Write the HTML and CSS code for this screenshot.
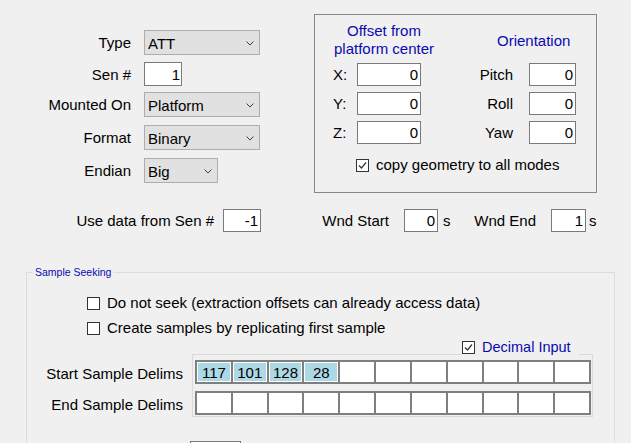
FILE: index.html
```html
<!DOCTYPE html>
<html>
<head>
<meta charset="utf-8">
<link rel="stylesheet" href="styles.css">
</head>
<body>
<div class="page">
  <div class="top">
    <div class="form">
      <div class="lbl">Type</div>
      <div class="combo w116"><span>ATT</span><svg class="chev" width="8" height="5" viewBox="0 0 8 5"><path d="M0.5 0.5 L4 4 L7.5 0.5" fill="none" stroke="#404040" stroke-width="1"/></svg></div>
      <div class="lbl lh24">Sen #</div>
      <div class="tb sen">1</div>
      <div class="lbl">Mounted On</div>
      <div class="combo w116"><span>Platform</span><svg class="chev" width="8" height="5" viewBox="0 0 8 5"><path d="M0.5 0.5 L4 4 L7.5 0.5" fill="none" stroke="#404040" stroke-width="1"/></svg></div>
      <div class="lbl">Format</div>
      <div class="combo w116"><span>Binary</span><svg class="chev" width="8" height="5" viewBox="0 0 8 5"><path d="M0.5 0.5 L4 4 L7.5 0.5" fill="none" stroke="#404040" stroke-width="1"/></svg></div>
      <div class="lbl">Endian</div>
      <div class="combo w74"><span>Big</span><svg class="chev" width="8" height="5" viewBox="0 0 8 5"><path d="M0.5 0.5 L4 4 L7.5 0.5" fill="none" stroke="#404040" stroke-width="1"/></svg></div>
    </div>
    <div class="geom">
      <div class="geo-grid">
        <div class="hdr hdr-offset">Offset from<br>platform center</div>
        <div class="hdr hdr-orient">Orientation</div>
        <div class="glbl">X:</div><div class="tb">0</div><div class="olbl">Pitch</div><div class="tb c5">0</div>
        <div class="glbl">Y:</div><div class="tb">0</div><div class="olbl">Roll</div><div class="tb c5">0</div>
        <div class="glbl">Z:</div><div class="tb">0</div><div class="olbl">Yaw</div><div class="tb c5">0</div>
        <div class="chk-row geo-chk">
          <span class="cb"><svg width="11" height="11" viewBox="0 0 11 11"><path d="M2 5.5 L4.5 8 L9 2.5" fill="none" stroke="#333" stroke-width="1.2"/></svg></span>
          <span>copy geometry to all modes</span>
        </div>
      </div>
    </div>
  </div>

  <div class="mid">
    <div class="m-lbl1">Use data from Sen #</div>
    <div class="tb m-sen">-1</div>
    <div class="m-lbl2">Wnd Start</div>
    <div class="tb m-ws">0</div>
    <div class="unit u1">s</div>
    <div class="m-lbl3">Wnd End</div>
    <div class="tb m-we">1</div>
    <div class="unit u2">s</div>
  </div>

  <fieldset class="seek">
    <legend>Sample Seeking</legend>
    <div class="chk-row opt opt1"><span class="cb"></span><span>Do not seek (extraction offsets can already access data)</span></div>
    <div class="chk-row opt opt2"><span class="cb"></span><span>Create samples by replicating first sample</span></div>
    <div class="delims">
      <div class="dl-labels">
        <div class="dl-lbl">Start Sample Delims</div>
        <div class="dl-lbl">End Sample Delims</div>
      </div>
      <div class="panel">
        <div class="chk-row dec">
          <span class="cb"><svg width="11" height="11" viewBox="0 0 11 11"><path d="M2 5.5 L4.5 8 L9 2.5" fill="none" stroke="#333" stroke-width="1.2"/></svg></span>
          <span class="blue">Decimal Input</span>
        </div>
        <div class="cells">
          <div class="cell on">117</div><div class="cell on">101</div><div class="cell on">128</div><div class="cell on">28</div>
          <div class="cell"></div><div class="cell"></div><div class="cell"></div><div class="cell"></div>
          <div class="cell"></div><div class="cell"></div><div class="cell"></div>
        </div>
        <div class="cells row2">
          <div class="cell"></div><div class="cell"></div><div class="cell"></div><div class="cell"></div>
          <div class="cell"></div><div class="cell"></div><div class="cell"></div><div class="cell"></div>
          <div class="cell"></div><div class="cell"></div><div class="cell"></div>
        </div>
      </div>
    </div>
    <div class="bottom-row"><div class="tb bottom-tb"></div></div>
  </fieldset>
</div>
</body>
</html>
```

FILE: styles.css
```css
html, body {
  margin: 0;
  padding: 0;
  overflow: hidden;
  background: #f0f0f0;
}
body {
  font-family: "Liberation Sans", Arial, sans-serif;
  font-size: 15px;
  color: #000;
}
.page {
  width: 631px;
  height: 443px;
  overflow: hidden;
}

/* ---------- generic controls ---------- */
.tb {
  box-sizing: border-box;
  background: #fff;
  border: 1px solid #7a7a7a;
  height: 23px;
  line-height: 22px;
  text-align: right;
  padding-right: 2px;
  white-space: nowrap;
}
.combo {
  box-sizing: border-box;
  height: 25px;
  background: #e1e1e1;
  border: 1px solid #adadad;
  display: flex;
  align-items: center;
  justify-content: space-between;
  padding: 1px 5px 0 3px;
  line-height: 23px;
}
.chev { display: block; }
.w116 { width: 116px; }
.w74 { width: 74px; }
.cb {
  box-sizing: border-box;
  width: 13px;
  height: 13px;
  border: 1px solid #333;
  background: #fff;
  display: flex;
  align-items: center;
  justify-content: center;
  flex: none;
}
.cb svg { display: block; }
.chk-row {
  display: flex;
  align-items: center;
  gap: 7px;
  white-space: nowrap;
  height: 18px;
  line-height: 18px;
}
.blue { color: #0a0ab0; }

/* ---------- top section ---------- */
.top {
  display: flex;
  align-items: flex-start;
  height: 193px;
}
.form {
  padding-top: 30px;
  display: grid;
  grid-template-columns: 131px auto;
  grid-template-rows: 32px 30px 33px 33px 25px;
  column-gap: 13px;
  align-items: start;
  justify-items: start;
}
.form .lbl {
  justify-self: end;
  line-height: 26px;
  white-space: nowrap;
}
.form .lbl.lh24 { line-height: 25px; }
.sen { width: 38px; height: 24px; line-height: 23px; padding-right: 1px; }

.geom {
  box-sizing: border-box;
  margin-left: 54px;
  margin-top: 14px;
  width: 283px;
  height: 179px;
  border: 1px solid #888;
  padding: 7px 0 0 18px;
}
.geo-grid {
  display: grid;
  grid-template-columns: 24px 64px 92px 16px 47px;
  grid-template-rows: 35px 23px 23px 23px auto;
  row-gap: 6px;
  align-items: start;
}
.hdr {
  color: #0a0ab0;
  line-height: 18px;
  white-space: nowrap;
}
.hdr-offset {
  grid-column: 1 / 3;
  grid-row: 1;
  justify-self: start;
  width: 102px;
  text-align: center;
}
.hdr-orient {
  grid-column: 4 / 6;
  grid-row: 1;
  align-self: center;
  justify-self: start;
  margin-left: -16px;
  margin-top: 2px;
}
.glbl {
  grid-column: 1;
  line-height: 24px;
}
.olbl {
  grid-column: 3;
  justify-self: end;
  line-height: 24px;
}
.c5 { grid-column: 5; }
.geo-chk {
  grid-column: 1 / 6;
  margin-top: 6px;
  padding-left: 23px;
}

/* ---------- middle row ---------- */
.mid {
  display: flex;
  align-items: center;
  margin-top: 16px;
  height: 23px;
  white-space: nowrap;
}
.m-lbl1 { width: 214px; text-align: right; margin-right: 9px; }
.m-sen { width: 38px; }
.m-lbl2 { width: 128px; text-align: right; margin-right: 15px; }
.m-ws { width: 34px; }
.unit { width: 8px; }
.u1 { margin-left: 5px; }
.m-lbl3 { width: 85px; text-align: right; margin-right: 15px; }
.m-we { width: 35px; }
.u2 { margin-left: 3px; }

/* ---------- sample seeking ---------- */
.seek {
  box-sizing: border-box;
  margin: 34px 0 0 26px;
  width: 589px;
  height: 240px;
  padding: 0;
  border: 1px solid #dcdcdc;
  min-width: 0;
}
.seek legend {
  font-size: 10.5px;
  line-height: 13px;
  color: #0a0ab0;
  padding: 0 2px;
  margin-left: 6px;
}
.opt { padding-left: 60px; }
.opt1 { margin-top: 15px; }
.opt2 { margin-top: 7px; }

.delims {
  display: flex;
  align-items: flex-start;
  margin-top: 17px;
}
.dl-labels {
  width: 156px;
  margin-right: 9px;
  padding-top: 6px;
  display: flex;
  flex-direction: column;
  gap: 7px;
}
.dl-lbl {
  text-align: right;
  line-height: 24px;
  padding-top: 2px;
  height: 22px;
  white-space: nowrap;
}
.panel {
  position: relative;
  border: 1px solid #dadada;
  padding: 5px 1px 1px 2px;
  display: flex;
  flex-direction: column;
  gap: 7px;
}
.dec {
  position: absolute;
  top: -17px;
  left: 269px;
  height: 18px;
  padding-right: 8px;
  background: #f0f0f0;
}
.dec .blue { font-size: 14.5px; }
.cells {
  box-sizing: border-box;
  width: 396px;
  display: grid;
  grid-template-columns: repeat(11, 1fr);
  gap: 2px;
  padding: 2px;
  background: #7f7f7f;
}
.cell {
  height: 20px;
  background: #fff;
  text-align: center;
  line-height: 21px;
}
.cell.on {
  background: #add8e6;
  box-shadow: inset 0 0 0 1px #fff;
}

.bottom-row {
  margin-top: 24px;
  padding-left: 163px;
}
.bottom-tb { width: 51px; }
```
